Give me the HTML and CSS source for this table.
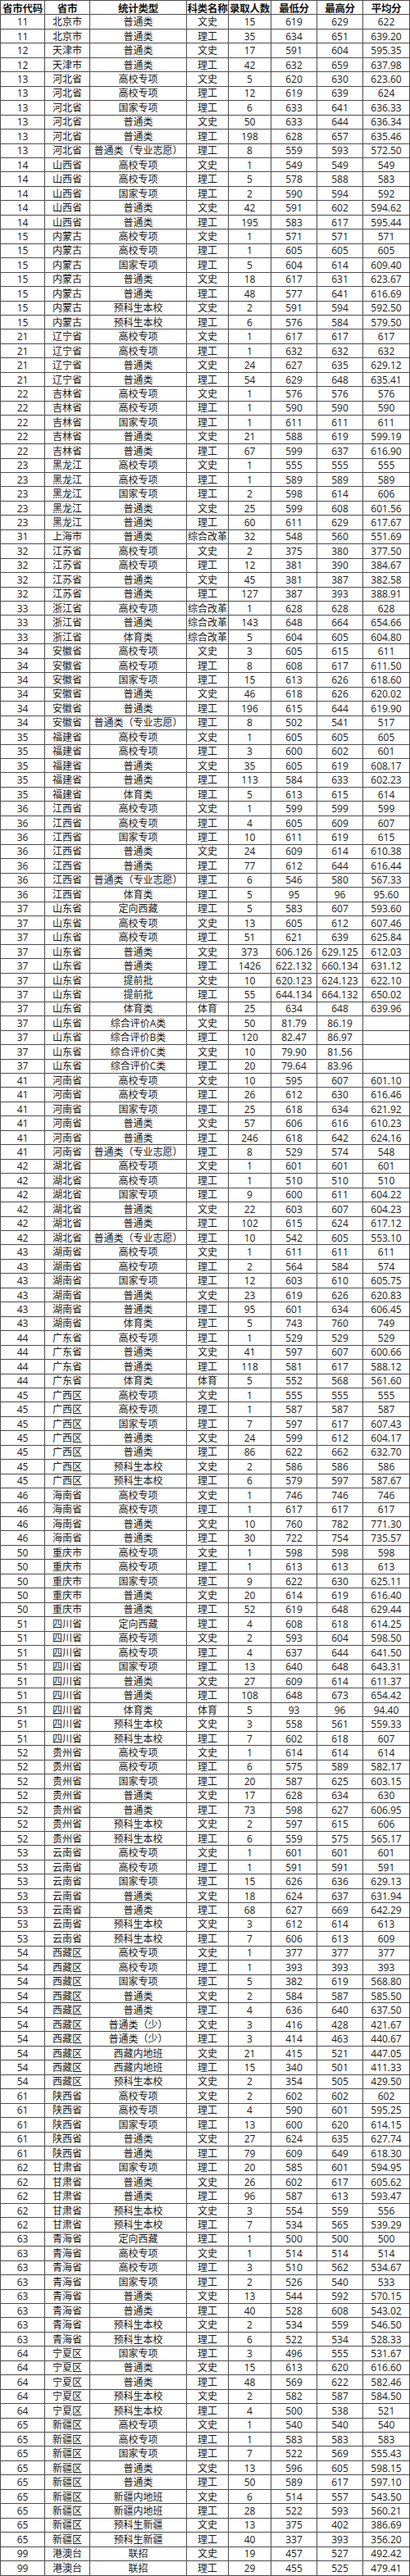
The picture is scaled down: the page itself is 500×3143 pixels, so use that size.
FILE: index.html
```html
<!DOCTYPE html>
<html lang="zh-CN">
<head>
<meta charset="utf-8">
<title>录取分数统计</title>
<link rel="stylesheet" href="styles.css">
</head>
<body>
<table class="scores">
<thead>
<tr><th>省市代码</th><th>省市</th><th>统计类型</th><th>科类名称</th><th>录取人数</th><th>最低分</th><th>最高分</th><th>平均分</th></tr>
</thead>
<tbody>
<tr><td>11</td><td>北京市</td><td>普通类</td><td>文史</td><td>15</td><td>619</td><td>629</td><td>622</td></tr>
<tr><td>11</td><td>北京市</td><td>普通类</td><td>理工</td><td>35</td><td>634</td><td>651</td><td>639.20</td></tr>
<tr><td>12</td><td>天津市</td><td>普通类</td><td>文史</td><td>17</td><td>591</td><td>604</td><td>595.35</td></tr>
<tr><td>12</td><td>天津市</td><td>普通类</td><td>理工</td><td>42</td><td>632</td><td>659</td><td>637.98</td></tr>
<tr><td>13</td><td>河北省</td><td>高校专项</td><td>文史</td><td>5</td><td>620</td><td>630</td><td>623.60</td></tr>
<tr><td>13</td><td>河北省</td><td>高校专项</td><td>理工</td><td>12</td><td>619</td><td>639</td><td>624</td></tr>
<tr><td>13</td><td>河北省</td><td>国家专项</td><td>理工</td><td>6</td><td>633</td><td>641</td><td>636.33</td></tr>
<tr><td>13</td><td>河北省</td><td>普通类</td><td>文史</td><td>50</td><td>633</td><td>644</td><td>636.34</td></tr>
<tr><td>13</td><td>河北省</td><td>普通类</td><td>理工</td><td>198</td><td>628</td><td>657</td><td>635.46</td></tr>
<tr><td>13</td><td>河北省</td><td>普通类（专业志愿）</td><td>理工</td><td>8</td><td>559</td><td>593</td><td>572.50</td></tr>
<tr><td>14</td><td>山西省</td><td>高校专项</td><td>文史</td><td>1</td><td>549</td><td>549</td><td>549</td></tr>
<tr><td>14</td><td>山西省</td><td>高校专项</td><td>理工</td><td>5</td><td>578</td><td>588</td><td>583</td></tr>
<tr><td>14</td><td>山西省</td><td>国家专项</td><td>理工</td><td>2</td><td>590</td><td>594</td><td>592</td></tr>
<tr><td>14</td><td>山西省</td><td>普通类</td><td>文史</td><td>42</td><td>591</td><td>602</td><td>594.62</td></tr>
<tr><td>14</td><td>山西省</td><td>普通类</td><td>理工</td><td>195</td><td>583</td><td>617</td><td>595.44</td></tr>
<tr><td>15</td><td>内蒙古</td><td>高校专项</td><td>文史</td><td>1</td><td>571</td><td>571</td><td>571</td></tr>
<tr><td>15</td><td>内蒙古</td><td>高校专项</td><td>理工</td><td>1</td><td>605</td><td>605</td><td>605</td></tr>
<tr><td>15</td><td>内蒙古</td><td>国家专项</td><td>理工</td><td>5</td><td>604</td><td>614</td><td>609.40</td></tr>
<tr><td>15</td><td>内蒙古</td><td>普通类</td><td>文史</td><td>18</td><td>617</td><td>631</td><td>623.67</td></tr>
<tr><td>15</td><td>内蒙古</td><td>普通类</td><td>理工</td><td>48</td><td>577</td><td>641</td><td>616.69</td></tr>
<tr><td>15</td><td>内蒙古</td><td>预科生本校</td><td>文史</td><td>2</td><td>591</td><td>594</td><td>592.50</td></tr>
<tr><td>15</td><td>内蒙古</td><td>预科生本校</td><td>理工</td><td>6</td><td>576</td><td>584</td><td>579.50</td></tr>
<tr><td>21</td><td>辽宁省</td><td>高校专项</td><td>文史</td><td>1</td><td>617</td><td>617</td><td>617</td></tr>
<tr><td>21</td><td>辽宁省</td><td>高校专项</td><td>理工</td><td>1</td><td>632</td><td>632</td><td>632</td></tr>
<tr><td>21</td><td>辽宁省</td><td>普通类</td><td>文史</td><td>24</td><td>627</td><td>635</td><td>629.12</td></tr>
<tr><td>21</td><td>辽宁省</td><td>普通类</td><td>理工</td><td>54</td><td>629</td><td>648</td><td>635.41</td></tr>
<tr><td>22</td><td>吉林省</td><td>高校专项</td><td>文史</td><td>1</td><td>576</td><td>576</td><td>576</td></tr>
<tr><td>22</td><td>吉林省</td><td>高校专项</td><td>理工</td><td>1</td><td>590</td><td>590</td><td>590</td></tr>
<tr><td>22</td><td>吉林省</td><td>国家专项</td><td>理工</td><td>1</td><td>611</td><td>611</td><td>611</td></tr>
<tr><td>22</td><td>吉林省</td><td>普通类</td><td>文史</td><td>21</td><td>588</td><td>619</td><td>599.19</td></tr>
<tr><td>22</td><td>吉林省</td><td>普通类</td><td>理工</td><td>67</td><td>599</td><td>637</td><td>616.90</td></tr>
<tr><td>23</td><td>黑龙江</td><td>高校专项</td><td>文史</td><td>1</td><td>555</td><td>555</td><td>555</td></tr>
<tr><td>23</td><td>黑龙江</td><td>高校专项</td><td>理工</td><td>1</td><td>589</td><td>589</td><td>589</td></tr>
<tr><td>23</td><td>黑龙江</td><td>国家专项</td><td>理工</td><td>2</td><td>598</td><td>614</td><td>606</td></tr>
<tr><td>23</td><td>黑龙江</td><td>普通类</td><td>文史</td><td>25</td><td>599</td><td>608</td><td>601.56</td></tr>
<tr><td>23</td><td>黑龙江</td><td>普通类</td><td>理工</td><td>60</td><td>611</td><td>629</td><td>617.67</td></tr>
<tr><td>31</td><td>上海市</td><td>普通类</td><td>综合改革</td><td>32</td><td>548</td><td>560</td><td>551.69</td></tr>
<tr><td>32</td><td>江苏省</td><td>高校专项</td><td>文史</td><td>2</td><td>375</td><td>380</td><td>377.50</td></tr>
<tr><td>32</td><td>江苏省</td><td>高校专项</td><td>理工</td><td>12</td><td>381</td><td>390</td><td>384.67</td></tr>
<tr><td>32</td><td>江苏省</td><td>普通类</td><td>文史</td><td>45</td><td>381</td><td>387</td><td>382.58</td></tr>
<tr><td>32</td><td>江苏省</td><td>普通类</td><td>理工</td><td>127</td><td>387</td><td>393</td><td>388.91</td></tr>
<tr><td>33</td><td>浙江省</td><td>高校专项</td><td>综合改革</td><td>1</td><td>628</td><td>628</td><td>628</td></tr>
<tr><td>33</td><td>浙江省</td><td>普通类</td><td>综合改革</td><td>143</td><td>648</td><td>664</td><td>654.66</td></tr>
<tr><td>33</td><td>浙江省</td><td>体育类</td><td>综合改革</td><td>5</td><td>604</td><td>605</td><td>604.80</td></tr>
<tr><td>34</td><td>安徽省</td><td>高校专项</td><td>文史</td><td>3</td><td>605</td><td>615</td><td>611</td></tr>
<tr><td>34</td><td>安徽省</td><td>高校专项</td><td>理工</td><td>8</td><td>608</td><td>617</td><td>611.50</td></tr>
<tr><td>34</td><td>安徽省</td><td>国家专项</td><td>理工</td><td>15</td><td>613</td><td>626</td><td>618.60</td></tr>
<tr><td>34</td><td>安徽省</td><td>普通类</td><td>文史</td><td>46</td><td>618</td><td>626</td><td>620.02</td></tr>
<tr><td>34</td><td>安徽省</td><td>普通类</td><td>理工</td><td>196</td><td>615</td><td>644</td><td>619.90</td></tr>
<tr><td>34</td><td>安徽省</td><td>普通类（专业志愿）</td><td>理工</td><td>8</td><td>502</td><td>541</td><td>517</td></tr>
<tr><td>35</td><td>福建省</td><td>高校专项</td><td>文史</td><td>1</td><td>605</td><td>605</td><td>605</td></tr>
<tr><td>35</td><td>福建省</td><td>高校专项</td><td>理工</td><td>3</td><td>600</td><td>602</td><td>601</td></tr>
<tr><td>35</td><td>福建省</td><td>普通类</td><td>文史</td><td>35</td><td>605</td><td>619</td><td>608.17</td></tr>
<tr><td>35</td><td>福建省</td><td>普通类</td><td>理工</td><td>113</td><td>584</td><td>633</td><td>602.23</td></tr>
<tr><td>35</td><td>福建省</td><td>体育类</td><td>理工</td><td>5</td><td>613</td><td>615</td><td>614</td></tr>
<tr><td>36</td><td>江西省</td><td>高校专项</td><td>文史</td><td>1</td><td>599</td><td>599</td><td>599</td></tr>
<tr><td>36</td><td>江西省</td><td>高校专项</td><td>理工</td><td>4</td><td>605</td><td>609</td><td>607</td></tr>
<tr><td>36</td><td>江西省</td><td>国家专项</td><td>理工</td><td>10</td><td>611</td><td>619</td><td>615</td></tr>
<tr><td>36</td><td>江西省</td><td>普通类</td><td>文史</td><td>24</td><td>609</td><td>614</td><td>610.38</td></tr>
<tr><td>36</td><td>江西省</td><td>普通类</td><td>理工</td><td>77</td><td>612</td><td>644</td><td>616.44</td></tr>
<tr><td>36</td><td>江西省</td><td>普通类（专业志愿）</td><td>理工</td><td>6</td><td>546</td><td>580</td><td>567.33</td></tr>
<tr><td>36</td><td>江西省</td><td>体育类</td><td>理工</td><td>5</td><td>95</td><td>96</td><td>95.60</td></tr>
<tr><td>37</td><td>山东省</td><td>定向西藏</td><td>理工</td><td>5</td><td>583</td><td>607</td><td>593.60</td></tr>
<tr><td>37</td><td>山东省</td><td>高校专项</td><td>文史</td><td>13</td><td>605</td><td>612</td><td>607.46</td></tr>
<tr><td>37</td><td>山东省</td><td>高校专项</td><td>理工</td><td>51</td><td>621</td><td>639</td><td>625.84</td></tr>
<tr><td>37</td><td>山东省</td><td>普通类</td><td>文史</td><td>373</td><td>606.126</td><td>629.125</td><td>612.03</td></tr>
<tr><td>37</td><td>山东省</td><td>普通类</td><td>理工</td><td>1426</td><td>622.132</td><td>660.134</td><td>631.12</td></tr>
<tr><td>37</td><td>山东省</td><td>提前批</td><td>文史</td><td>10</td><td>620.123</td><td>624.123</td><td>622.10</td></tr>
<tr><td>37</td><td>山东省</td><td>提前批</td><td>理工</td><td>55</td><td>644.134</td><td>664.132</td><td>650.02</td></tr>
<tr><td>37</td><td>山东省</td><td>体育类</td><td>体育</td><td>25</td><td>634</td><td>648</td><td>639.96</td></tr>
<tr><td>37</td><td>山东省</td><td>综合评价A类</td><td>文史</td><td>50</td><td>81.79</td><td>86.19</td><td></td></tr>
<tr><td>37</td><td>山东省</td><td>综合评价B类</td><td>理工</td><td>120</td><td>82.47</td><td>86.97</td><td></td></tr>
<tr><td>37</td><td>山东省</td><td>综合评价C类</td><td>文史</td><td>10</td><td>79.90</td><td>81.56</td><td></td></tr>
<tr><td>37</td><td>山东省</td><td>综合评价C类</td><td>理工</td><td>20</td><td>79.64</td><td>83.96</td><td></td></tr>
<tr><td>41</td><td>河南省</td><td>高校专项</td><td>文史</td><td>10</td><td>595</td><td>607</td><td>601.10</td></tr>
<tr><td>41</td><td>河南省</td><td>高校专项</td><td>理工</td><td>26</td><td>612</td><td>630</td><td>616.46</td></tr>
<tr><td>41</td><td>河南省</td><td>国家专项</td><td>理工</td><td>25</td><td>618</td><td>634</td><td>621.92</td></tr>
<tr><td>41</td><td>河南省</td><td>普通类</td><td>文史</td><td>57</td><td>606</td><td>616</td><td>610.23</td></tr>
<tr><td>41</td><td>河南省</td><td>普通类</td><td>理工</td><td>246</td><td>618</td><td>642</td><td>624.16</td></tr>
<tr><td>41</td><td>河南省</td><td>普通类（专业志愿）</td><td>理工</td><td>8</td><td>529</td><td>574</td><td>548</td></tr>
<tr><td>42</td><td>湖北省</td><td>高校专项</td><td>文史</td><td>1</td><td>601</td><td>601</td><td>601</td></tr>
<tr><td>42</td><td>湖北省</td><td>高校专项</td><td>理工</td><td>1</td><td>510</td><td>510</td><td>510</td></tr>
<tr><td>42</td><td>湖北省</td><td>国家专项</td><td>理工</td><td>9</td><td>600</td><td>611</td><td>604.22</td></tr>
<tr><td>42</td><td>湖北省</td><td>普通类</td><td>文史</td><td>22</td><td>603</td><td>607</td><td>604.23</td></tr>
<tr><td>42</td><td>湖北省</td><td>普通类</td><td>理工</td><td>102</td><td>615</td><td>624</td><td>617.12</td></tr>
<tr><td>42</td><td>湖北省</td><td>普通类（专业志愿）</td><td>理工</td><td>10</td><td>542</td><td>605</td><td>553.10</td></tr>
<tr><td>43</td><td>湖南省</td><td>高校专项</td><td>文史</td><td>1</td><td>611</td><td>611</td><td>611</td></tr>
<tr><td>43</td><td>湖南省</td><td>高校专项</td><td>理工</td><td>2</td><td>564</td><td>584</td><td>574</td></tr>
<tr><td>43</td><td>湖南省</td><td>国家专项</td><td>理工</td><td>12</td><td>603</td><td>610</td><td>605.75</td></tr>
<tr><td>43</td><td>湖南省</td><td>普通类</td><td>文史</td><td>23</td><td>619</td><td>626</td><td>620.83</td></tr>
<tr><td>43</td><td>湖南省</td><td>普通类</td><td>理工</td><td>95</td><td>601</td><td>634</td><td>606.45</td></tr>
<tr><td>43</td><td>湖南省</td><td>体育类</td><td>理工</td><td>5</td><td>743</td><td>760</td><td>749</td></tr>
<tr><td>44</td><td>广东省</td><td>高校专项</td><td>理工</td><td>1</td><td>529</td><td>529</td><td>529</td></tr>
<tr><td>44</td><td>广东省</td><td>普通类</td><td>文史</td><td>41</td><td>597</td><td>607</td><td>600.66</td></tr>
<tr><td>44</td><td>广东省</td><td>普通类</td><td>理工</td><td>118</td><td>581</td><td>617</td><td>588.12</td></tr>
<tr><td>44</td><td>广东省</td><td>体育类</td><td>体育</td><td>5</td><td>552</td><td>568</td><td>561.60</td></tr>
<tr><td>45</td><td>广西区</td><td>高校专项</td><td>文史</td><td>1</td><td>555</td><td>555</td><td>555</td></tr>
<tr><td>45</td><td>广西区</td><td>高校专项</td><td>理工</td><td>1</td><td>587</td><td>587</td><td>587</td></tr>
<tr><td>45</td><td>广西区</td><td>国家专项</td><td>理工</td><td>7</td><td>597</td><td>617</td><td>607.43</td></tr>
<tr><td>45</td><td>广西区</td><td>普通类</td><td>文史</td><td>24</td><td>599</td><td>612</td><td>604.17</td></tr>
<tr><td>45</td><td>广西区</td><td>普通类</td><td>理工</td><td>86</td><td>622</td><td>662</td><td>632.70</td></tr>
<tr><td>45</td><td>广西区</td><td>预科生本校</td><td>文史</td><td>2</td><td>586</td><td>586</td><td>586</td></tr>
<tr><td>45</td><td>广西区</td><td>预科生本校</td><td>理工</td><td>6</td><td>579</td><td>597</td><td>587.67</td></tr>
<tr><td>46</td><td>海南省</td><td>高校专项</td><td>文史</td><td>1</td><td>746</td><td>746</td><td>746</td></tr>
<tr><td>46</td><td>海南省</td><td>高校专项</td><td>理工</td><td>1</td><td>617</td><td>617</td><td>617</td></tr>
<tr><td>46</td><td>海南省</td><td>普通类</td><td>文史</td><td>10</td><td>760</td><td>782</td><td>771.30</td></tr>
<tr><td>46</td><td>海南省</td><td>普通类</td><td>理工</td><td>30</td><td>722</td><td>754</td><td>735.57</td></tr>
<tr><td>50</td><td>重庆市</td><td>高校专项</td><td>文史</td><td>1</td><td>598</td><td>598</td><td>598</td></tr>
<tr><td>50</td><td>重庆市</td><td>高校专项</td><td>理工</td><td>1</td><td>613</td><td>613</td><td>613</td></tr>
<tr><td>50</td><td>重庆市</td><td>国家专项</td><td>理工</td><td>9</td><td>622</td><td>630</td><td>625.11</td></tr>
<tr><td>50</td><td>重庆市</td><td>普通类</td><td>文史</td><td>20</td><td>614</td><td>619</td><td>616.40</td></tr>
<tr><td>50</td><td>重庆市</td><td>普通类</td><td>理工</td><td>52</td><td>619</td><td>648</td><td>629.44</td></tr>
<tr><td>51</td><td>四川省</td><td>定向西藏</td><td>理工</td><td>4</td><td>608</td><td>618</td><td>614.25</td></tr>
<tr><td>51</td><td>四川省</td><td>高校专项</td><td>文史</td><td>2</td><td>593</td><td>604</td><td>598.50</td></tr>
<tr><td>51</td><td>四川省</td><td>高校专项</td><td>理工</td><td>4</td><td>637</td><td>644</td><td>641.50</td></tr>
<tr><td>51</td><td>四川省</td><td>国家专项</td><td>理工</td><td>13</td><td>640</td><td>648</td><td>643.31</td></tr>
<tr><td>51</td><td>四川省</td><td>普通类</td><td>文史</td><td>27</td><td>609</td><td>614</td><td>611.37</td></tr>
<tr><td>51</td><td>四川省</td><td>普通类</td><td>理工</td><td>108</td><td>648</td><td>673</td><td>654.42</td></tr>
<tr><td>51</td><td>四川省</td><td>体育类</td><td>体育</td><td>5</td><td>93</td><td>96</td><td>94.40</td></tr>
<tr><td>51</td><td>四川省</td><td>预科生本校</td><td>文史</td><td>3</td><td>558</td><td>561</td><td>559.33</td></tr>
<tr><td>51</td><td>四川省</td><td>预科生本校</td><td>理工</td><td>7</td><td>602</td><td>618</td><td>607</td></tr>
<tr><td>52</td><td>贵州省</td><td>高校专项</td><td>文史</td><td>1</td><td>614</td><td>614</td><td>614</td></tr>
<tr><td>52</td><td>贵州省</td><td>高校专项</td><td>理工</td><td>6</td><td>575</td><td>589</td><td>582.17</td></tr>
<tr><td>52</td><td>贵州省</td><td>国家专项</td><td>理工</td><td>20</td><td>587</td><td>625</td><td>603.15</td></tr>
<tr><td>52</td><td>贵州省</td><td>普通类</td><td>文史</td><td>17</td><td>628</td><td>634</td><td>630</td></tr>
<tr><td>52</td><td>贵州省</td><td>普通类</td><td>理工</td><td>73</td><td>598</td><td>627</td><td>606.95</td></tr>
<tr><td>52</td><td>贵州省</td><td>预科生本校</td><td>文史</td><td>2</td><td>597</td><td>615</td><td>606</td></tr>
<tr><td>52</td><td>贵州省</td><td>预科生本校</td><td>理工</td><td>6</td><td>559</td><td>575</td><td>565.17</td></tr>
<tr><td>53</td><td>云南省</td><td>高校专项</td><td>文史</td><td>1</td><td>601</td><td>601</td><td>601</td></tr>
<tr><td>53</td><td>云南省</td><td>高校专项</td><td>理工</td><td>1</td><td>591</td><td>591</td><td>591</td></tr>
<tr><td>53</td><td>云南省</td><td>国家专项</td><td>理工</td><td>15</td><td>626</td><td>636</td><td>629.13</td></tr>
<tr><td>53</td><td>云南省</td><td>普通类</td><td>文史</td><td>18</td><td>624</td><td>637</td><td>631.94</td></tr>
<tr><td>53</td><td>云南省</td><td>普通类</td><td>理工</td><td>68</td><td>627</td><td>669</td><td>642.29</td></tr>
<tr><td>53</td><td>云南省</td><td>预科生本校</td><td>文史</td><td>3</td><td>612</td><td>614</td><td>613</td></tr>
<tr><td>53</td><td>云南省</td><td>预科生本校</td><td>理工</td><td>7</td><td>606</td><td>613</td><td>609</td></tr>
<tr><td>54</td><td>西藏区</td><td>高校专项</td><td>文史</td><td>1</td><td>377</td><td>377</td><td>377</td></tr>
<tr><td>54</td><td>西藏区</td><td>高校专项</td><td>理工</td><td>1</td><td>393</td><td>393</td><td>393</td></tr>
<tr><td>54</td><td>西藏区</td><td>国家专项</td><td>理工</td><td>5</td><td>382</td><td>619</td><td>568.80</td></tr>
<tr><td>54</td><td>西藏区</td><td>普通类</td><td>文史</td><td>2</td><td>584</td><td>587</td><td>585.50</td></tr>
<tr><td>54</td><td>西藏区</td><td>普通类</td><td>理工</td><td>4</td><td>636</td><td>640</td><td>637.50</td></tr>
<tr><td>54</td><td>西藏区</td><td>普通类（少）</td><td>文史</td><td>3</td><td>416</td><td>428</td><td>421.67</td></tr>
<tr><td>54</td><td>西藏区</td><td>普通类（少）</td><td>理工</td><td>3</td><td>414</td><td>463</td><td>440.67</td></tr>
<tr><td>54</td><td>西藏区</td><td>西藏内地班</td><td>文史</td><td>21</td><td>415</td><td>521</td><td>447.05</td></tr>
<tr><td>54</td><td>西藏区</td><td>西藏内地班</td><td>理工</td><td>15</td><td>340</td><td>501</td><td>411.33</td></tr>
<tr><td>54</td><td>西藏区</td><td>预科生本校</td><td>文史</td><td>2</td><td>354</td><td>505</td><td>429.50</td></tr>
<tr><td>61</td><td>陕西省</td><td>高校专项</td><td>文史</td><td>2</td><td>602</td><td>602</td><td>602</td></tr>
<tr><td>61</td><td>陕西省</td><td>高校专项</td><td>理工</td><td>4</td><td>590</td><td>601</td><td>595.25</td></tr>
<tr><td>61</td><td>陕西省</td><td>国家专项</td><td>理工</td><td>13</td><td>600</td><td>620</td><td>614.15</td></tr>
<tr><td>61</td><td>陕西省</td><td>普通类</td><td>文史</td><td>27</td><td>624</td><td>635</td><td>627.74</td></tr>
<tr><td>61</td><td>陕西省</td><td>普通类</td><td>理工</td><td>79</td><td>609</td><td>649</td><td>618.30</td></tr>
<tr><td>62</td><td>甘肃省</td><td>国家专项</td><td>理工</td><td>20</td><td>585</td><td>601</td><td>594.95</td></tr>
<tr><td>62</td><td>甘肃省</td><td>普通类</td><td>文史</td><td>26</td><td>602</td><td>617</td><td>605.62</td></tr>
<tr><td>62</td><td>甘肃省</td><td>普通类</td><td>理工</td><td>96</td><td>587</td><td>613</td><td>593.47</td></tr>
<tr><td>62</td><td>甘肃省</td><td>预科生本校</td><td>文史</td><td>3</td><td>554</td><td>559</td><td>556</td></tr>
<tr><td>62</td><td>甘肃省</td><td>预科生本校</td><td>理工</td><td>7</td><td>534</td><td>565</td><td>539.29</td></tr>
<tr><td>63</td><td>青海省</td><td>定向西藏</td><td>理工</td><td>1</td><td>500</td><td>500</td><td>500</td></tr>
<tr><td>63</td><td>青海省</td><td>高校专项</td><td>文史</td><td>1</td><td>514</td><td>514</td><td>514</td></tr>
<tr><td>63</td><td>青海省</td><td>高校专项</td><td>理工</td><td>3</td><td>510</td><td>562</td><td>534.67</td></tr>
<tr><td>63</td><td>青海省</td><td>国家专项</td><td>理工</td><td>2</td><td>526</td><td>540</td><td>533</td></tr>
<tr><td>63</td><td>青海省</td><td>普通类</td><td>文史</td><td>13</td><td>544</td><td>592</td><td>570.15</td></tr>
<tr><td>63</td><td>青海省</td><td>普通类</td><td>理工</td><td>40</td><td>528</td><td>608</td><td>543.02</td></tr>
<tr><td>63</td><td>青海省</td><td>预科生本校</td><td>文史</td><td>2</td><td>534</td><td>559</td><td>546.50</td></tr>
<tr><td>63</td><td>青海省</td><td>预科生本校</td><td>理工</td><td>6</td><td>522</td><td>534</td><td>528.33</td></tr>
<tr><td>64</td><td>宁夏区</td><td>国家专项</td><td>理工</td><td>3</td><td>496</td><td>555</td><td>531.67</td></tr>
<tr><td>64</td><td>宁夏区</td><td>普通类</td><td>文史</td><td>15</td><td>613</td><td>620</td><td>616.60</td></tr>
<tr><td>64</td><td>宁夏区</td><td>普通类</td><td>理工</td><td>48</td><td>569</td><td>622</td><td>582.46</td></tr>
<tr><td>64</td><td>宁夏区</td><td>预科生本校</td><td>文史</td><td>2</td><td>582</td><td>587</td><td>584.50</td></tr>
<tr><td>64</td><td>宁夏区</td><td>预科生本校</td><td>理工</td><td>4</td><td>500</td><td>538</td><td>521</td></tr>
<tr><td>65</td><td>新疆区</td><td>高校专项</td><td>文史</td><td>1</td><td>540</td><td>540</td><td>540</td></tr>
<tr><td>65</td><td>新疆区</td><td>高校专项</td><td>理工</td><td>1</td><td>583</td><td>583</td><td>583</td></tr>
<tr><td>65</td><td>新疆区</td><td>国家专项</td><td>理工</td><td>7</td><td>522</td><td>569</td><td>555.43</td></tr>
<tr><td>65</td><td>新疆区</td><td>普通类</td><td>文史</td><td>13</td><td>596</td><td>605</td><td>598.15</td></tr>
<tr><td>65</td><td>新疆区</td><td>普通类</td><td>理工</td><td>50</td><td>589</td><td>617</td><td>597.10</td></tr>
<tr><td>65</td><td>新疆区</td><td>新疆内地班</td><td>文史</td><td>6</td><td>514</td><td>557</td><td>543.50</td></tr>
<tr><td>65</td><td>新疆区</td><td>新疆内地班</td><td>理工</td><td>28</td><td>522</td><td>593</td><td>560.21</td></tr>
<tr><td>65</td><td>新疆区</td><td>预科生新疆</td><td>文史</td><td>13</td><td>375</td><td>402</td><td>386.69</td></tr>
<tr><td>65</td><td>新疆区</td><td>预科生新疆</td><td>理工</td><td>40</td><td>337</td><td>393</td><td>356.20</td></tr>
<tr><td>99</td><td>港澳台</td><td>联招</td><td>文史</td><td>19</td><td>457</td><td>527</td><td>492.42</td></tr>
<tr><td>99</td><td>港澳台</td><td>联招</td><td>理工</td><td>29</td><td>455</td><td>525</td><td>479.41</td></tr>
</tbody>
</table>
</body>
</html>
```

FILE: styles.css
```css
html, body {
  margin: 0;
  padding: 0;
  background: #ffffff;
}

body {
  width: 500px;
  font-family: "Open Sans", "Noto Sans CJK SC", sans-serif;
  color: #1a1a1a;
}

/* The table is laid out as a grid so every row gets the exact
   fractional height of the source sheet. */
.scores {
  display: grid;
  grid-template-columns: 54px 55px 118px 51px 52px 56px 56px 57px;
  grid-auto-rows: 17.455px;
  width: 500px;
  box-sizing: border-box;
  border-top: 1px solid #4d4d4d;
  border-left: 1px solid #4d4d4d;
  border-spacing: 0;
}

.scores thead,
.scores tbody,
.scores tr {
  display: contents;
}

.scores th,
.scores td {
  display: flex;
  align-items: center;
  justify-content: center;
  box-sizing: border-box;
  border-right: 1px solid #4d4d4d;
  border-bottom: 1px solid #4d4d4d;
  padding: 0;
  line-height: 15px;
  white-space: nowrap;
  overflow: hidden;
  font-size: 12px;
  font-weight: normal;
}

.scores th {
  font-family: "Noto Sans CJK SC", sans-serif;
  font-weight: bold;
  font-size: 12.5px;
  letter-spacing: -0.3px;
  color: #111111;
}
```
